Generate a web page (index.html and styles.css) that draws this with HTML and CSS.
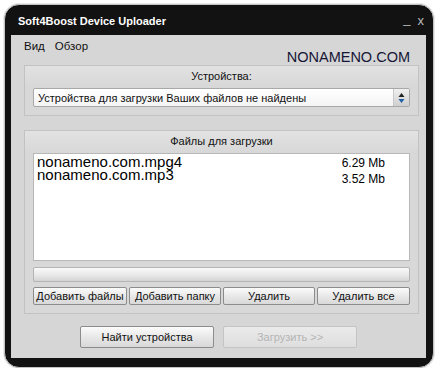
FILE: index.html
```html
<!DOCTYPE html>
<html lang="ru">
<head>
    <meta charset="UTF-8">
    <title>Soft4Boost Device Uploader</title>
    <link rel="stylesheet" href="styles.css">
</head>
<body>
    <div class="window">
        <div class="titlebar">
            <span class="title">Soft4Boost Device Uploader</span>
            <span class="controls">
                <span class="ctl-min">_</span>
                <span class="ctl-close">x</span>
            </span>
        </div>

        <div class="client">
            <div class="top-row">
                <div class="menu">
                    <span>Вид</span>
                    <span>Обзор</span>
                </div>
                <div class="brand">NONAMENO.COM</div>
            </div>

            <div class="group devices">
                <div class="group-label">Устройства:</div>
                <div class="select">
                    <span class="select-text">Устройства для загрузки Ваших файлов не найдены</span>
                    <span class="spin">
                        <svg width="7" height="12" viewBox="0 0 7 12">
                            <path d="M3.5 1 L6.5 5 L0.5 5 Z" fill="#222"/>
                            <path d="M3.5 11 L6.5 7 L0.5 7 Z" fill="#1f5fa8"/>
                        </svg>
                    </span>
                </div>
            </div>

            <div class="group files">
                <div class="group-label">Файлы для загрузки</div>
                <div class="file-list">
                    <div class="file-names">
                        <div>nonameno.com.mpg4</div>
                        <div>nonameno.com.mp3</div>
                    </div>
                    <div class="file-sizes">
                        <div>6.29 Mb</div>
                        <div>3.52 Mb</div>
                    </div>
                </div>
                <div class="progress"></div>
                <div class="file-buttons">
                    <button class="btn">Добавить файлы</button>
                    <button class="btn">Добавить папку</button>
                    <button class="btn">Удалить</button>
                    <button class="btn">Удалить все</button>
                </div>
            </div>

            <div class="actions">
                <button class="btn big">Найти устройства</button>
                <button class="btn big" disabled>Загрузить &gt;&gt;</button>
            </div>
        </div>
    </div>
</body>
</html>
```

FILE: styles.css
```css
body {
    margin: 0;
    background-color: #fff;
    font-family: "Liberation Sans", Arial, sans-serif;
    font-size: 11px;
    color: #111;
}
.window {
    margin: 4px 0 0 4px;
    width: 430px;
    height: 364px;
    box-sizing: border-box;
    background-color: #121212;
    border: 1px solid #c4c4c4;
    border-radius: 15px;
    box-shadow: 0 0 0 1px #e8e8e8;
    display: flex;
    flex-direction: column;
    padding: 0 7px 9px 6px;
}
.titlebar {
    height: 30px;
    display: flex;
    align-items: center;
    justify-content: space-between;
    padding-left: 7px;
}
.title {
    color: #fff;
    font-weight: bold;
    font-size: 11px;
    padding-top: 1px;
}
.controls {
    display: flex;
    gap: 7px;
    color: #bbb;
    font-size: 13px;
    padding-right: 2px;
}
.ctl-min {
    position: relative;
    top: -2px;
}
.client {
    flex: 1;
    background-color: #d6d6d6;
    padding: 0 7px 0 13px;
    display: flex;
    flex-direction: column;
}
.top-row {
    display: flex;
    justify-content: space-between;
    height: 30px;
}
.menu {
    display: flex;
    gap: 10px;
    padding: 5px 0 0 0;
    font-size: 11.5px;
}
.brand {
    font-size: 14.5px;
    color: #151536;
    padding: 14px 9px 0 0;
}
.group {
    border: 1px solid #c2c2c2;
    background: linear-gradient(#e2e2e2, #d8d8d8 20px);
    padding: 0 8px;
}
.group-label {
    text-align: center;
    height: 21px;
    line-height: 21px;
}
.devices {
    height: 51px;
    box-sizing: border-box;
}
.select {
    margin-top: 1px;
    height: 19px;
    box-sizing: border-box;
    border: 1px solid #a8a8a8;
    border-radius: 2px;
    background: linear-gradient(#fff, #f4f4f4);
    display: flex;
    align-items: center;
    justify-content: space-between;
}
.select-text {
    padding-left: 4px;
}
.spin {
    width: 15px;
    height: 17px;
    display: flex;
    align-items: center;
    justify-content: center;
    background: linear-gradient(#f0f0f0, #cfcfcf);
    border-left: 1px solid #c8c8c8;
}
.files {
    margin-top: 14px;
    height: 184px;
    box-sizing: border-box;
}
.file-list {
    margin-top: 1px;
    height: 108px;
    box-sizing: border-box;
    background-color: #fff;
    border: 1px solid #b8b8b8;
    padding: 1px 24px 0 3px;
    display: flex;
    justify-content: space-between;
    color: #000;
}
.file-names {
    font-size: 15px;
    line-height: 13px;
}
.file-sizes {
    font-size: 12px;
    line-height: 16px;
}
.progress {
    margin-top: 6px;
    height: 15px;
    box-sizing: border-box;
    border: 1px solid #b4b4b4;
    border-radius: 2px;
    background: linear-gradient(#fafafa, #e6e6e6 60%, #d4d4d4);
}
.file-buttons {
    margin-top: 5px;
    display: grid;
    grid-template-columns: 94px 92px 92px 93px;
    gap: 2px;
    justify-content: space-between;
}
.btn {
    font-family: "Liberation Sans", Arial, sans-serif;
    font-size: 11px;
    color: #111;
    height: 18px;
    padding: 0;
    border: 1px solid #8c8c8c;
    border-radius: 2px;
    background: linear-gradient(#fbfbfb, #e8e8e8 50%, #d9d9d9);
    white-space: nowrap;
}
.actions {
    display: flex;
    justify-content: center;
    gap: 9px;
    margin-top: 12px;
    padding-right: 6px;
}
.btn.big {
    width: 134px;
    height: 22px;
}
.btn[disabled] {
    color: #b4b4b4;
    border-color: #c4c4c4;
    background: linear-gradient(#eaeaea, #dedede);
}
```
